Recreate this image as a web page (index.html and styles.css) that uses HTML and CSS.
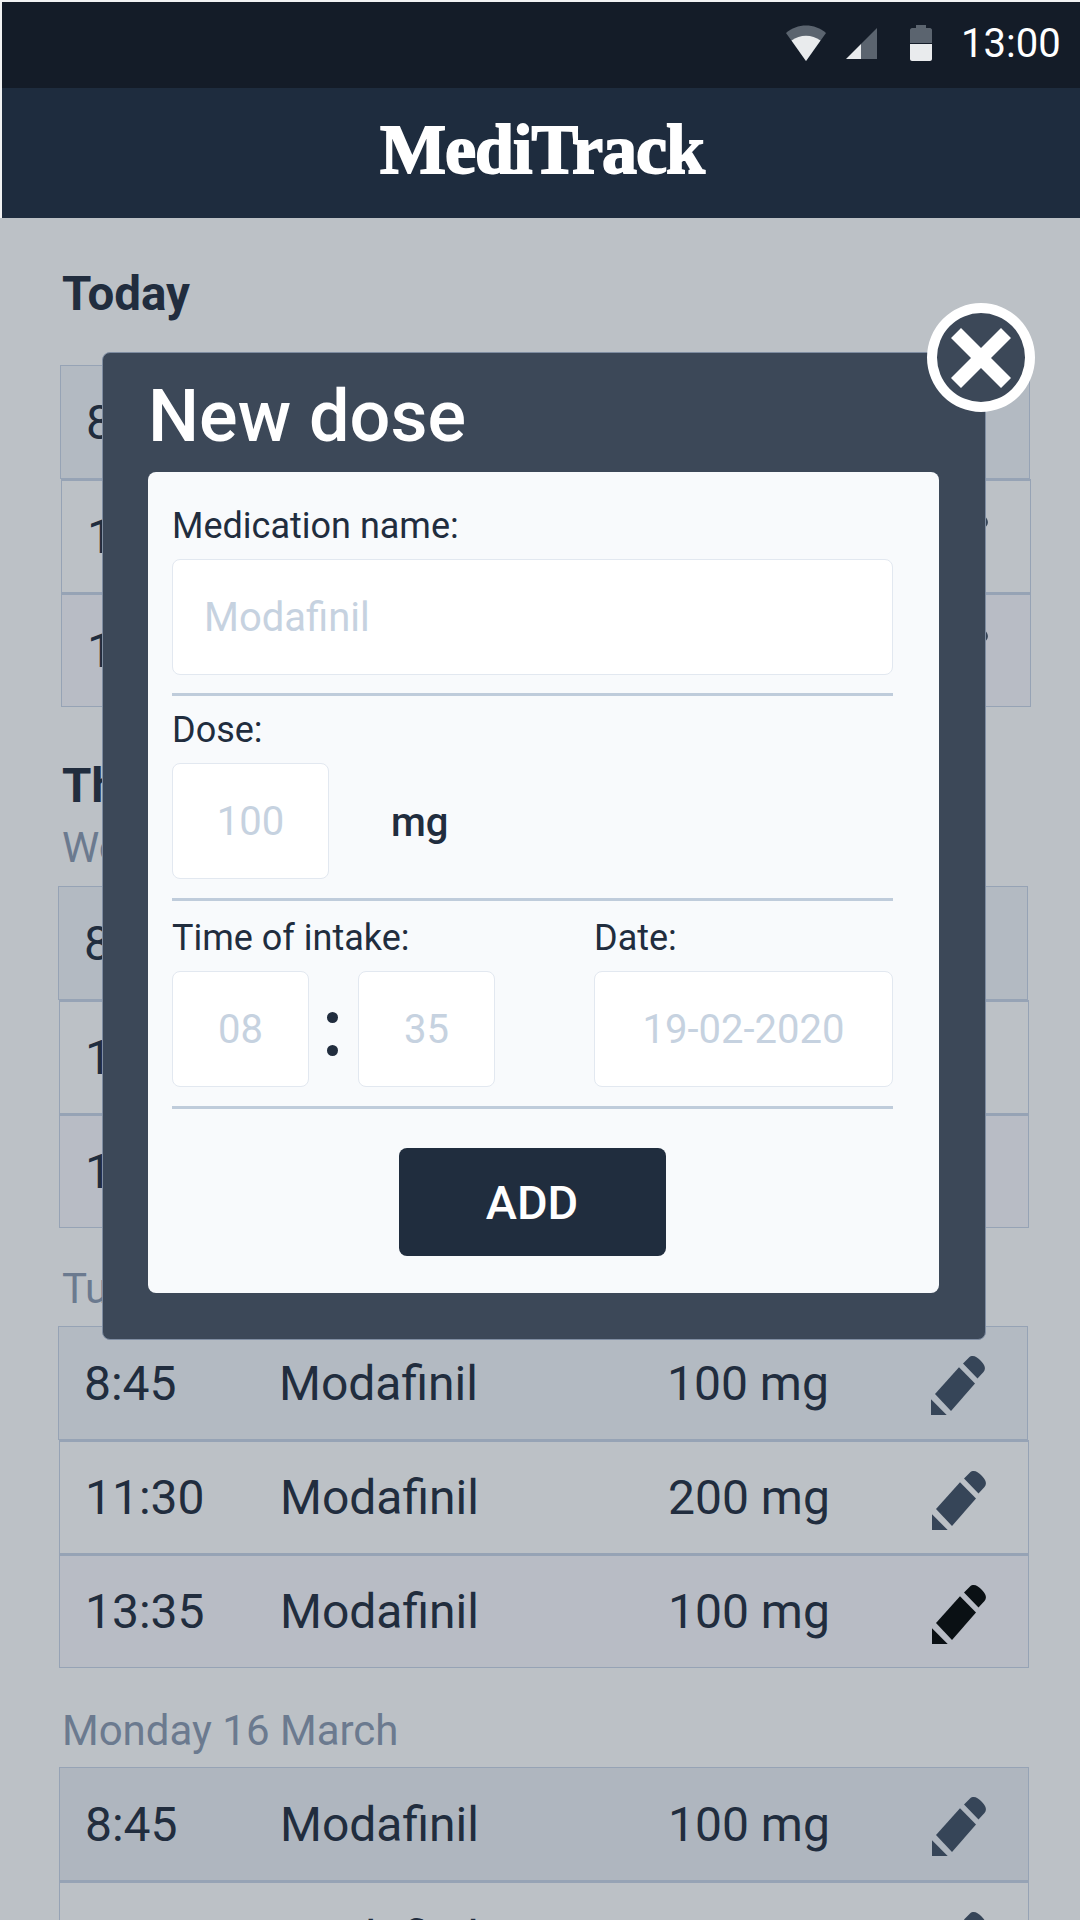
FILE: index.html
```html
<!DOCTYPE html>
<html lang="en">
<head>
<meta charset="utf-8">
<title>MediTrack</title>
<link rel="stylesheet" href="styles.css">
</head>
<body>
<svg class="defs" width="0" height="0" aria-hidden="true">
  <symbol id="pencil" viewBox="0 0 54 59">
    <path d="M0 43.3V59H15.7Z"/>
    <path d="M4 38L28 11.2L44 27.5L20 55Z"/>
    <path d="M32 7.5L38 1.5C40 -.4 43 -.4 45.5 1.2C49 3.5 51.5 6 53 9C54.4 11.5 54.2 14 52.5 16L46.5 22.5Z"/>
  </symbol>
</svg>
<div class="chrome">
  <div class="status">
    <svg class="ic-wifi" viewBox="0 0 40 36"><path class="dim" d="M0 8C11 -2 29 -2 40 8L20 36Z"/><path class="lit" d="M5.500 15.500C14 9 26 9 34.500 15.500L20 36Z"/></svg>
    <svg class="ic-signal" viewBox="0 0 31 31"><path class="dim" d="M31 0V31H15V16Z"/><path class="lit" d="M15 16V31H0Z"/></svg>
    <svg class="ic-battery" viewBox="0 0 22 36"><path class="dim" d="M6 0H16V3H20C21 3 22 4 22 5V18H0V5C0 4 1 3 2 3H6Z"/><path class="lit" d="M0 19H22V34C22 35 21 36 20 36H2C1 36 0 35 0 34Z"/></svg>
    <span class="clock">13:00</span>
  </div>
  <header class="appbar"><h1 class="brand">MediTrack</h1></header>
</div>
<main class="content">
  <h2 class="heading">Today</h2>
  <div class="list">
    <div class="row row--tint-a off-2"><span>8:45</span><span>Modafinil</span><span>100 mg</span><svg class="pen"><use href="#pencil"/></svg></div>
    <div class="row off-3"><span>11:30</span><span>Modafinil</span><span>200 mg</span><svg class="pen"><use href="#pencil"/></svg></div>
    <div class="row row--tint-b off-3"><span>13:35</span><span>Modafinil</span><span>100 mg</span><svg class="pen"><use href="#pencil"/></svg></div>
  </div>
  <h2 class="heading heading--section">This week</h2>
  <p class="day day--first">Wednesday 18 March</p>
  <div class="list">
    <div class="row row--tint-a"><span>8:45</span><span>Modafinil</span><span>100 mg</span><svg class="pen"><use href="#pencil"/></svg></div>
    <div class="row off-1"><span>11:30</span><span>Modafinil</span><span>200 mg</span><svg class="pen"><use href="#pencil"/></svg></div>
    <div class="row row--tint-b off-1"><span>13:35</span><span>Modafinil</span><span>100 mg</span><svg class="pen"><use href="#pencil"/></svg></div>
  </div>
  <p class="day">Tuesday 17 March</p>
  <div class="list">
    <div class="row row--tint-a"><span>8:45</span><span>Modafinil</span><span>100 mg</span><svg class="pen"><use href="#pencil"/></svg></div>
    <div class="row off-1"><span>11:30</span><span>Modafinil</span><span>200 mg</span><svg class="pen"><use href="#pencil"/></svg></div>
    <div class="row row--tint-b off-1"><span>13:35</span><span>Modafinil</span><span>100 mg</span><svg class="pen pen--black"><use href="#pencil"/></svg></div>
  </div>
  <p class="day day--last">Monday 16 March</p>
  <div class="list">
    <div class="row row--tint-c off-1"><span>8:45</span><span>Modafinil</span><span>100 mg</span><svg class="pen"><use href="#pencil"/></svg></div>
    <div class="row off-1"><span>11:30</span><span>Modafinil</span><span>200 mg</span><svg class="pen"><use href="#pencil"/></svg></div>
  </div>
</main>
<section class="modal">
  <button class="close" aria-label="Close"><svg viewBox="0 0 60 60"><path d="M10 0L30 20L50 0L60 10L40 30L60 50L50 60L30 40L10 60L0 50L20 30L0 10Z"/></svg></button>
  <h2 class="modal-title">New dose</h2>
  <form class="card">
    <div class="group group--name">
      <label class="label">Medication name:</label>
      <div class="field field--wide">Modafinil</div>
    </div>
    <div class="group group--dose">
      <label class="label">Dose:</label>
      <div class="inline">
        <div class="field field--dose">100</div>
        <span class="unit">mg</span>
      </div>
    </div>
    <div class="group group--split">
      <div>
        <label class="label">Time of intake:</label>
        <div class="inline">
          <div class="field field--time">08</div>
          <span class="colon"><i></i><i></i></span>
          <div class="field field--time">35</div>
        </div>
      </div>
      <div>
        <label class="label">Date:</label>
        <div class="field field--date">19-02-2020</div>
      </div>
    </div>
    <button class="add" type="button">ADD</button>
  </form>
</section>
</body>
</html>
```
FILE: styles.css
```css
* { box-sizing: border-box; }
html, body { margin: 0; padding: 0; }
body {
  position: relative;
  width: 1080px;
  height: 1920px;
  overflow: hidden;
  background: #bcc1c6;
  color: #212d3e;
  font-family: Roboto, "Liberation Sans", sans-serif;
}
.defs { position: absolute; }

.chrome { background: #f1f2f3; padding: 2px 0 0 2px; }
.status {
  height: 86px;
  background: #141c28;
  display: flex;
  align-items: flex-start;
  color: #fff;
}
.status .dim { fill: #5b646f; }
.status .lit { fill: #e9ebed; }
.ic-wifi { width: 40px; height: 36px; margin: 23px 0 0 784px; }
.ic-signal { width: 31px; height: 31px; margin: 26px 0 0 20px; }
.ic-battery { width: 22px; height: 36px; margin: 23px 0 0 33px; }
.clock { font-size: 40px; line-height: 46px; margin: 19px 0 0 29px; }

.appbar {
  height: 130px;
  background: #1e2c3e;
  display: flex;
  align-items: center;
  justify-content: center;
}
.brand {
  margin: 0 0 6px 2px;
  font-family: "Liberation Serif", serif;
  font-size: 70px;
  font-weight: 700;
  line-height: 1;
  letter-spacing: -1px;
  color: #fff;
  -webkit-text-stroke: 1.800px #fff;
}

.content { padding: 51px 0 0 58px; width: 1034px; }
.heading {
  margin: 0 0 46px 4px;
  font-size: 47.500px;
  font-weight: 700;
  line-height: 50px;
  color: #212d3e;
}
.heading--section { margin: 54px 0 0 4px; }
.day {
  margin: 36px 0 12px 4px;
  font-size: 42px;
  line-height: 50px;
  color: #6b7a8f;
}
.day--first { margin-top: 12px; margin-bottom: 13px; }
.day--last { margin-top: 38px; margin-bottom: 11px; }

.row {
  width: 970px;
  height: 114px;
  display: grid;
  grid-template-columns: 195px 388px 264px 54px;
  align-items: center;
  padding-left: 25px;
  border: 1px solid #96a3b5;
  font-size: 48px;
}
.row + .row { border-top-width: 2px; }
.row--tint-a { background: #b3bac2; }
.row--tint-b { background: #b8bcc5; }
.row--tint-c { background: #afb6bf; }
.off-1 { margin-left: 1px; }
.off-2 { margin-left: 2px; }
.off-3 { margin-left: 3px; }
.pen { width: 54px; height: 59px; margin-top: 5px; fill: #364558; }
.pen--black { fill: #0a1014; }

.modal {
  position: absolute;
  left: 102px;
  top: 352px;
  width: 884px;
  height: 988px;
  padding: 24px 46px 0 45px;
  background: #3c4858;
  border: 1px solid #7f8da1;
  border-radius: 8px;
  color: #fff;
}
.close {
  position: absolute;
  left: 824px;
  top: -50px;
  width: 108px;
  height: 109px;
  padding: 0;
  display: flex;
  align-items: center;
  justify-content: center;
  border: 10px solid #fff;
  border-radius: 50%;
  background: #3c4858;
}
.close svg { width: 60px; height: 60px; fill: #fff; }
.modal-title {
  margin: 0 0 18px;
  padding-top: 2px;
  font-size: 72px;
  font-weight: 500;
  line-height: 75px;
}
.card {
  display: flex;
  flex-direction: column;
  height: 821px;
  padding: 32px 46px 0 24px;
  background: #f8fafc;
  border-radius: 8px;
  color: #212d3e;
}
.group { border-bottom: 3px solid #bfccdb; }
.group--name { padding-bottom: 18px; margin-bottom: 12px; }
.group--dose { padding-bottom: 19px; margin-bottom: 15px; }
.group--split { display: flex; justify-content: space-between; padding-bottom: 19px; margin-bottom: 39px; }
.label { display: block; font-size: 36px; line-height: 44px; margin-bottom: 11px; }
.inline { display: flex; align-items: center; }
.field {
  height: 116px;
  display: flex;
  align-items: center;
  background: #fff;
  border: 1px solid #e2e8f0;
  border-radius: 8px;
  font-size: 40px;
  color: #c6d2e0;
}
.field--wide { padding-left: 31px; width: 721px; }
.field--dose { width: 157px; justify-content: center; }
.field--time { width: 137px; justify-content: center; }
.field--date { width: 299px; justify-content: center; }
.unit { margin-left: 62px; padding-top: 3px; font-size: 40px; font-weight: 500; }
.colon { width: 49px; padding: 9px 3px 0 0; display: flex; flex-direction: column; align-items: center; gap: 22px; }
.colon i { width: 11px; height: 11px; border-radius: 50%; background: #212d3e; }
.add {
  align-self: center;
  width: 267px;
  height: 108px;
  margin-left: -1px;
  padding-top: 2px;
  border: 0;
  border-radius: 8px;
  background: #202d3e;
  color: #fff;
  font-family: Roboto, "Liberation Sans", sans-serif;
  font-size: 47px;
  font-weight: 500;
}
```
